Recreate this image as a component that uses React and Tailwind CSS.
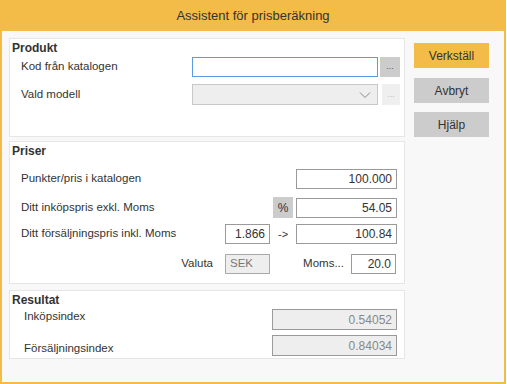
import React from "react";

const font = { fontFamily: '"Liberation Sans", Arial, sans-serif' };

const Panel = ({ title, className, children }) => (
    <div className={`bg-white border border-[#e6e6e6] pl-[2px] ${className}`}>
        <div className="text-[12px] font-bold text-[#333] leading-[14px] pt-[2px]">{title}</div>
        {children}
    </div>
);

const Field = ({ value, className = "", muted = false }) => (
    <div
        className={`h-[20px] border border-[#9a9a9a] flex items-center justify-end pr-[4px] text-[12px] ${
            muted ? "bg-[#eeeeee] text-[#888]" : "bg-white text-[#333]"
        } ${className}`}
    >
        {value}
    </div>
);

export default function App() {
    return (
        <div style={font} className="w-[506px] h-[384px] border-[2px] border-t-0 border-[#f3bb47] bg-[#f8f8f8] flex flex-col">
            <div className="h-[31px] bg-[#f3bb47] flex items-center justify-center text-[13px] text-[#333]">
                Assistent för prisberäkning
            </div>

            <div className="flex pl-[7px] pt-[7px]">
                <div className="w-[396px] flex flex-col">
                    <Panel title="Produkt" className="h-[99px]">
                        <div className="flex items-center mt-[2px] pr-[4px] text-[11.5px] text-[#333]">
                            <div className="flex-1 pl-[9px]">Kod från katalogen</div>
                            <div className="w-[186px] h-[20px] border border-[#5b9be0] bg-white" />
                            <div className="w-[20px] h-[20px] ml-[2px] bg-[#cccccc] flex items-center justify-center text-[9px] text-[#555]">...</div>
                        </div>
                        <div className="flex items-center mt-[7px] pr-[4px] text-[11.5px] text-[#333]">
                            <div className="flex-1 pl-[9px]">Vald modell</div>
                            <div className="w-[186px] h-[21px] border border-[#c8c8c8] bg-[#eeeeee] flex items-center justify-end pr-[6px]">
                                <svg width="12" height="8" viewBox="0 0 12 8">
                                    <path d="M1 1.5 L6 6.5 L11 1.5" fill="none" stroke="#888" strokeWidth="1" />
                                </svg>
                            </div>
                            <div className="w-[18px] h-[21px] ml-[4px] bg-[#efefef] flex items-center justify-center text-[9px] text-[#bbb]">...</div>
                        </div>
                    </Panel>

                    <Panel title="Priser" className="h-[143px] mt-[4px]">
                        <div className="flex flex-col text-[11.5px] text-[#333] pr-[7px]">
                            <div className="flex items-center mt-[11px]">
                                <div className="flex-1 pl-[9px]">Punkter/pris i katalogen</div>
                                <Field value="100.000" className="w-[101px]" />
                            </div>
                            <div className="flex items-center mt-[8px]">
                                <div className="flex-1 pl-[9px]">Ditt inköpspris exkl. Moms</div>
                                <div className="w-[20px] h-[21px] bg-[#cccccc] flex items-center justify-center mr-[3px] text-[12px]">%</div>
                                <Field value="54.05" className="w-[101px]" />
                            </div>
                            <div className="flex items-center mt-[6px]">
                                <div className="flex-1 pl-[9px]">Ditt försäljningspris inkl. Moms</div>
                                <Field value="1.866" className="w-[45px]" />
                                <div className="w-[26px] pl-[8px] text-[11px]">-&gt;</div>
                                <Field value="100.84" className="w-[101px]" />
                            </div>
                            <div className="flex items-center mt-[10px]">
                                <div className="flex-1 text-right pr-[12px]">Valuta</div>
                                <div className="w-[45px] h-[20px] border border-[#aaa] bg-[#eeeeee] text-[#777] flex items-center pl-[4px]">SEK</div>
                                <div className="w-[81px] text-right pr-[7px]">Moms...</div>
                                <Field value="20.0" className="w-[45px] mr-[1px]" />
                            </div>
                        </div>
                    </Panel>

                    <Panel title="Resultat" className="h-[69px] mt-[6px]">
                        <div className="flex flex-col text-[11.5px] text-[#333] pr-[7px]">
                            <div className="flex items-start h-[21px] mt-[2px]">
                                <div className="flex-1 pl-[12px] leading-[14px]">Inköpsindex</div>
                                <Field value="0.54052" muted className="w-[125px] h-[21px]" />
                            </div>
                            <div className="flex items-end h-[21px] mt-[5px]">
                                <div className="flex-1 pl-[12px] leading-[14px] pb-[1px]">Försäljningsindex</div>
                                <Field value="0.84034" muted className="w-[125px] h-[21px]" />
                            </div>
                        </div>
                    </Panel>
                </div>

                <div className="flex flex-col ml-[9px] mt-[5px] w-[75px] text-[12px] text-[#333]">
                    <div className="h-[25px] bg-[#f3bb47] flex items-center justify-center">Verkställ</div>
                    <div className="h-[25px] mt-[10px] bg-[#cccccc] flex items-center justify-center">Avbryt</div>
                    <div className="h-[25px] mt-[9px] bg-[#cccccc] flex items-center justify-center">Hjälp</div>
                </div>
            </div>
        </div>
    );
}
